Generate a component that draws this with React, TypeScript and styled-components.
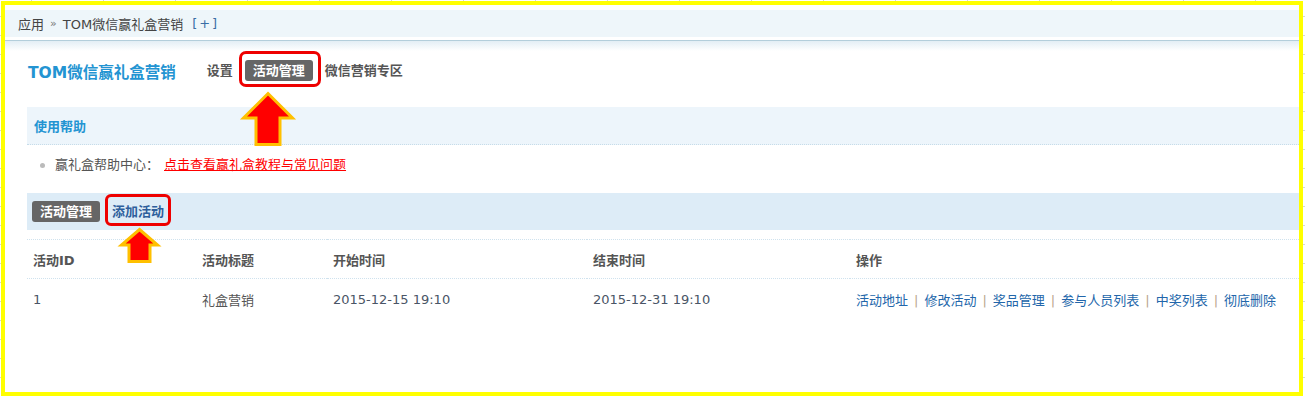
import * as React from 'react';
import styled, { createGlobalStyle } from 'styled-components';

const FONT = `"DejaVu Sans", "Noto Sans CJK SC", sans-serif`;

const GlobalStyle = createGlobalStyle`
  html, body {
    margin: 0;
    padding: 0;
  }
  body {
    font-family: ${FONT};
    font-size: 13px;
    color: #555;
    background-color: #fff;
    background-image:
      repeating-linear-gradient(90deg, transparent 0 31px, #d6d6d6 31px 32px, transparent 32px 72px),
      repeating-linear-gradient(180deg, transparent 0 16px, #d6d6d6 16px 17px, transparent 17px 19px);
  }
`;

const Frame = styled.div`
  position: relative;
  box-sizing: border-box;
  margin: 1px 0 0 1px;
  width: 1302px;
  height: 395px;
  border: 4px solid #ffff00;
  background: #fff;
  overflow: hidden;
`;

const Breadcrumb = styled.div`
  margin-top: 5px;
  height: 27px;
  display: flex;
  align-items: center;
  padding-left: 13px;
  background: #eef6fa;
  color: #444;
  font-size: 13px;
`;

const Raquo = styled.span`
  margin: 0 6px;
  color: #777;
  font-size: 11px;
`;

const AddLink = styled.span`
  margin-left: 9px;
  color: #3a6ea5;
  letter-spacing: 2px;
`;

const HeadRule = styled.div`
  margin-top: 3px;
  height: 10px;
  border-top: 1px solid #b3cedb;
  background: linear-gradient(#e3eef5, #fff);
`;

const Content = styled.div`
  padding-left: 22px;
`;

const TitleRow = styled.div`
  height: 39px;
  display: flex;
  align-items: center;
`;

const Title = styled.h1`
  margin: 0 31px 0 1px;
  font-size: 15.5px;
  font-weight: bold;
  color: #2394d2;
`;

const NavItem = styled.span<{ $active?: boolean; $marked?: boolean }>`
  position: relative;
  margin-right: 12px;
  font-weight: bold;
  font-size: 13px;
  line-height: 21px;
  color: ${(p) => (p.$active ? '#fff' : '#555')};
  background: ${(p) => (p.$active ? '#666' : 'transparent')};
  border-radius: 3px;
  padding: ${(p) => (p.$active ? '0 8px' : '0')};

  ${(p) =>
    p.$marked &&
    `
    &::after {
      content: '';
      position: absolute;
      left: -6px;
      right: -8px;
      top: -9px;
      bottom: -6px;
      border: 3px solid #ee0000;
      border-radius: 7px;
    }
  `}
`;

const HelpHead = styled.div`
  margin-top: 17px;
  height: 37px;
  display: flex;
  align-items: center;
  padding-left: 7px;
  background: #edf5fb;
  border-bottom: 1px dotted #c6dce9;
  font-weight: bold;
  color: #2394d2;
`;

const HelpList = styled.ul`
  margin: 0;
  padding: 12px 0 20px 13px;
  list-style: none;
`;

const HelpItem = styled.li`
  display: flex;
  align-items: center;
  line-height: 16px;
  color: #555;

  &::before {
    content: '';
    width: 5px;
    height: 5px;
    border-radius: 50%;
    background: #bbb;
    margin-right: 10px;
  }
`;

const HelpLink = styled.a`
  margin-left: 5px;
  color: #ff0000;
  text-decoration: underline;
`;

const ActionBar = styled.div`
  height: 37px;
  display: flex;
  align-items: center;
  padding-left: 5px;
  background: #ddecf7;
`;

const TabBadge = styled.span`
  line-height: 21px;
  padding: 0 8px;
  border-radius: 3px;
  background: #666;
  color: #fff;
  font-weight: bold;
`;

const TabLink = styled.span`
  position: relative;
  margin-left: 12px;
  line-height: 21px;
  font-weight: bold;
  color: #2e5f9c;

  &::after {
    content: '';
    position: absolute;
    left: -7px;
    right: -7px;
    top: -7px;
    bottom: -4px;
    border: 3px solid #ee0000;
    border-radius: 6px;
  }
`;

const Table = styled.table`
  margin-top: 9px;
  width: 100%;
  border-collapse: collapse;
  table-layout: fixed;
`;

const Th = styled.th<{ $w?: number }>`
  width: ${(p) => (p.$w ? `${p.$w - 6}px` : 'auto')};
  height: 38px;
  padding: 0 0 0 6px;
  text-align: left;
  font-weight: bold;
  color: #555;
  border-top: 1px dotted #cfe2ee;
  border-bottom: 1px dotted #cfe2ee;
`;

const Td = styled.td<{ $tone?: string }>`
  height: 40px;
  padding: 0 0 0 6px;
  color: ${(p) => p.$tone || '#555'};
  white-space: nowrap;
`;

const OpLink = styled.a`
  color: #2266aa;
  text-decoration: none;
`;

const Sep = styled.span`
  margin: 0 6px;
  color: #b9a58c;
`;

const Arrow = styled.svg`
  position: absolute;
  overflow: visible;
`;

const UpArrow = ({ x, y, w, h, head, shaft }: { x: number; y: number; w: number; h: number; head: number; shaft: number }) => {
  const s0 = (w - shaft) / 2;
  const s1 = s0 + shaft;
  return (
    <Arrow width={w} height={h} style={{ left: x, top: y }} viewBox={`0 0 ${w} ${h}`}>
      <polygon
        points={`${w / 2},1.5 ${w - 1.5},${head} ${s1},${head} ${s1},${h - 1.5} ${s0},${h - 1.5} ${s0},${head} 1.5,${head}`}
        fill="#ff0000"
        stroke="#ffc000"
        strokeWidth={3}
        strokeLinejoin="miter"
      />
    </Arrow>
  );
};

const ops = ['活动地址', '修改活动', '奖品管理', '参与人员列表', '中奖列表', '彻底删除'];

export default function App() {
  return (
    <>
      <GlobalStyle />
      <Frame>
        <Breadcrumb>
          应用<Raquo>»</Raquo>TOM微信赢礼盒营销
          <AddLink>[+]</AddLink>
        </Breadcrumb>
        <HeadRule />
        <Content>
          <TitleRow>
            <Title>TOM微信赢礼盒营销</Title>
            <NavItem>设置</NavItem>
            <NavItem $active $marked>活动管理</NavItem>
            <NavItem>微信营销专区</NavItem>
          </TitleRow>
          <HelpHead>使用帮助</HelpHead>
          <HelpList>
            <HelpItem>
              赢礼盒帮助中心：<HelpLink>点击查看赢礼盒教程与常见问题</HelpLink>
            </HelpItem>
          </HelpList>
          <ActionBar>
            <TabBadge>活动管理</TabBadge>
            <TabLink>添加活动</TabLink>
          </ActionBar>
          <Table>
            <thead>
              <tr>
                <Th $w={169}>活动ID</Th>
                <Th $w={131}>活动标题</Th>
                <Th $w={260}>开始时间</Th>
                <Th $w={263}>结束时间</Th>
                <Th>操作</Th>
              </tr>
            </thead>
            <tbody>
              <tr>
                <Td $tone="#4a5566">1</Td>
                <Td>礼盒营销</Td>
                <Td $tone="#4a5566">2015-12-15 19:10</Td>
                <Td $tone="#4a5566">2015-12-31 19:10</Td>
                <Td>
                  {ops.map((op, i) => (
                    <React.Fragment key={op}>
                      {i > 0 && <Sep>|</Sep>}
                      <OpLink>{op}</OpLink>
                    </React.Fragment>
                  ))}
                </Td>
              </tr>
            </tbody>
          </Table>
        </Content>
        <UpArrow x={237} y={87} w={52} h={54} head={26} shaft={24} />
        <UpArrow x={115} y={223} w={39} h={35} head={17} shaft={21} />
      </Frame>
    </>
  );
}
